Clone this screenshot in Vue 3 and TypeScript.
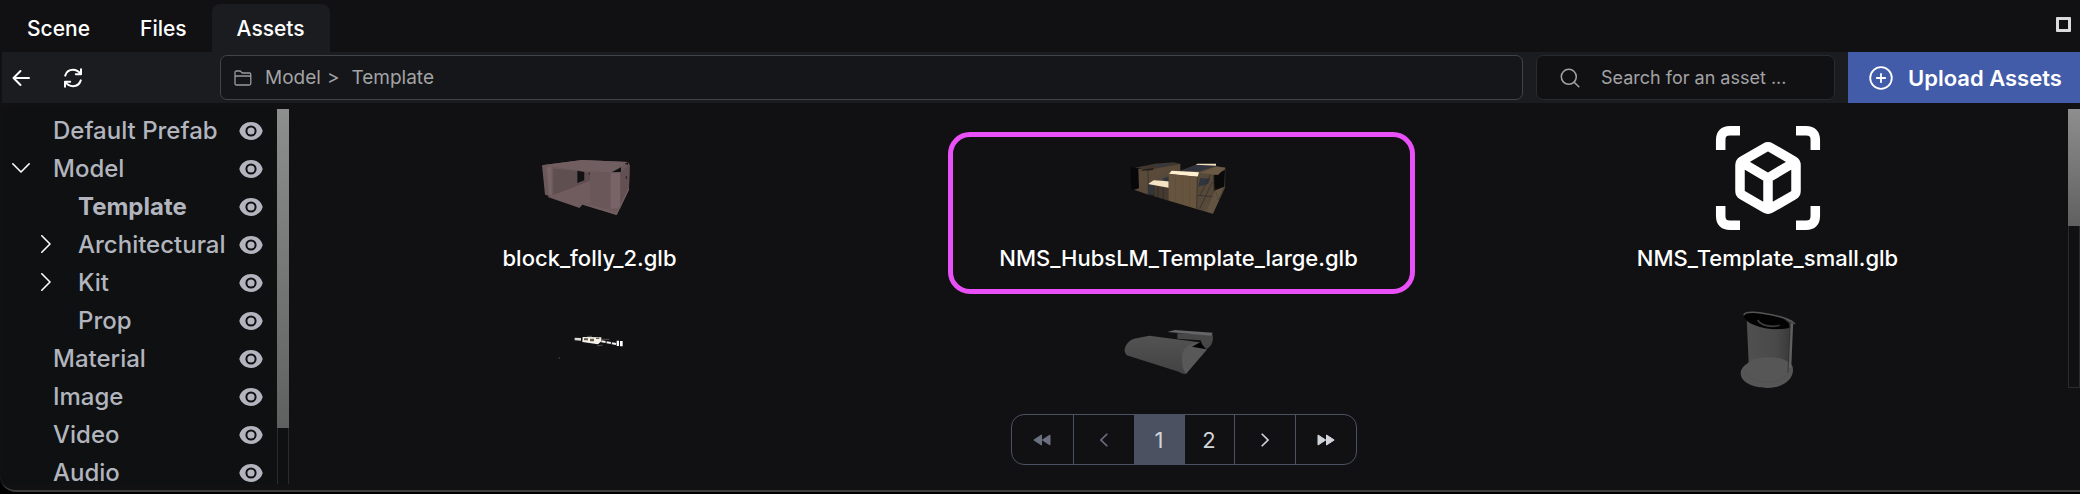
<script setup lang="ts">
import { ref } from 'vue'

interface TreeNode {
  label: string
  depth: 0 | 1
  state?: 'open' | 'closed'
}

interface Asset {
  kind: 'block' | 'building' | 'placeholder' | 'strip' | 'sheet' | 'cylinder'
  viewBox: string
  name?: string
  marked?: boolean
}

const tabs = ['Scene', 'Files', 'Assets']
const activeTab = ref('Assets')

const tree: TreeNode[] = [
  { label: 'Default Prefab', depth: 0 },
  { label: 'Model', depth: 0, state: 'open' },
  { label: 'Template', depth: 1 },
  { label: 'Architectural', depth: 1, state: 'closed' },
  { label: 'Kit', depth: 1, state: 'closed' },
  { label: 'Prop', depth: 1 },
  { label: 'Material', depth: 0 },
  { label: 'Image', depth: 0 },
  { label: 'Video', depth: 0 },
  { label: 'Audio', depth: 0 },
]
const selectedNode = ref('Template')

const assets: Asset[] = [
  { kind: 'block', viewBox: '90 -45 360 318', name: 'block_folly_2.glb' },
  { kind: 'building', viewBox: '592 15 360 318', name: 'NMS_HubsLM_Template_large.glb', marked: true },
  { kind: 'placeholder', viewBox: '0 0 120 106', name: 'NMS_Template_small.glb' },
  { kind: 'strip', viewBox: '30 -27 360 318' },
  { kind: 'sheet', viewBox: '57 -57 360 318' },
  { kind: 'cylinder', viewBox: '23 -27 360 318' },
]

const query = ref('')
const page = ref(1)
</script>

<template>
  <div class="app">
    <div class="frame">
      <header class="tabs">
        <button
          v-for="tab in tabs"
          :key="tab"
          type="button"
          class="tab"
          :class="{ active: tab === activeTab }"
          @click="activeTab = tab"
        >{{ tab }}</button>
        <button type="button" class="maximize" aria-label="Maximize"></button>
      </header>

      <div class="toolbar">
        <div class="history">
          <button type="button" class="icon-button" aria-label="Back">
            <svg width="18" height="18" viewBox="0 0 18 18" fill="none" stroke="#fff" stroke-width="2" stroke-linecap="round" stroke-linejoin="round">
              <path d="M17 9H1.5M8.5 2 1.5 9l7 7" />
            </svg>
          </button>
          <button type="button" class="icon-button" aria-label="Refresh">
            <svg width="20" height="20" viewBox="0 0 20 20" fill="none" stroke="#fff" stroke-width="2" stroke-linecap="round" stroke-linejoin="round">
              <path d="M2.2 7.6C3.4 3.9 6.5 1.800 10 1.800c3 0 5.500 1.300 7.500 4.200M18 1.200V6.300h-5.200M17.800 12.400C16.600 16.100 13.500 18.200 10 18.200c-3 0-5.500-1.300-7.500-4.200M2 18.800v-5.100h5.200" />
            </svg>
          </button>
        </div>

        <nav class="path" aria-label="Folder path">
          <svg width="18" height="16" viewBox="0 0 18 16" fill="none" stroke="#9a9a9c" stroke-width="1.300" stroke-linejoin="round">
            <path d="M1 13.500V2.500Q1 1 2.500 1H6.200L8.300 3H15.500Q16.800 3 16.800 4.500V13.500Q16.800 15 15.300 15H2.500Q1 15 1 13.500ZM1 7.500Q1 6 2.500 6H15.300Q16.800 6 16.800 7.500" />
          </svg>
          <a href="#model">Model</a><span class="separator">&gt;</span><a href="#template">Template</a>
        </nav>

        <label class="search">
          <svg width="20" height="20" viewBox="0 0 20 20" fill="none" stroke="#a3a3a5" stroke-width="1.500" stroke-linecap="round">
            <circle cx="8.800" cy="8.800" r="7.500" /><path d="m14.200 14.200 4.600 4.600" />
          </svg>
          <input v-model="query" type="text" aria-label="Search for an asset" placeholder="Search for an asset ..." />
        </label>

        <button type="button" class="upload">
          <svg width="24" height="24" viewBox="0 0 24 24" fill="none" stroke="#fff" stroke-width="1.800" stroke-linecap="round">
            <circle cx="12" cy="12" r="10.800" /><path d="M12 7.800v8.400M7.800 12h8.400" />
          </svg>
          <span>Upload Assets</span>
        </button>
      </div>

      <div class="body">
        <aside class="sidebar">
          <ul class="tree">
            <li v-for="node in tree" :key="node.label" class="node" :class="{ child: node.depth === 1, selected: node.label === selectedNode }">
              <span class="toggle">
                <button v-if="node.state" type="button" class="icon-button" :aria-label="node.state === 'open' ? 'Collapse' : 'Expand'">
                  <svg width="18" height="18" viewBox="0 0 18 18" fill="none" stroke="#fff" stroke-width="1.600" stroke-linecap="round" stroke-linejoin="round">
                    <path v-if="node.state === 'open'" d="m.8 4.800 8.200 8.200 8.200-8.200" />
                    <path v-else d="m4.800.8 8.200 8.200-8.200 8.200" />
                  </svg>
                </button>
              </span>
              <button type="button" class="node-label" @click="selectedNode = node.label">{{ node.label }}</button>
              <button type="button" class="icon-button" aria-label="Toggle visibility">
                <svg width="24" height="18" viewBox="0 0 24 18">
                  <path d="M12 0C6.600 0 2.200 3.200.6 7.900Q.2 9 .6 10.100C2.200 14.800 6.600 18 12 18s9.800-3.200 11.400-7.900q.4-1.100 0-2.200C21.800 3.200 17.400 0 12 0Z" fill="#b2b5bd" />
                  <circle cx="12" cy="9" r="4.600" fill="#b2b5bd" stroke="#0e1012" stroke-width="2" />
                </svg>
              </button>
            </li>
          </ul>
          <div class="scroll"><div class="thumb tree-thumb"></div></div>
        </aside>

        <main class="content">
          <div class="gallery">
            <div class="grid">
              <figure v-for="asset in assets" :key="asset.kind" class="asset">
                <div v-if="asset.marked" class="marker"></div>
                <svg class="preview" width="120" height="106" :viewBox="asset.viewBox" aria-hidden="true">
                  <g v-if="asset.kind === 'block'">
                    <path d="m126 76 120-16 138 6 5 9-2 74-37 76-103-32-10 10-92-31v-5l-10-3Z" fill="#6b585a" />
                    <path d="m160 86 72 7v32l22-3v-24l16-2v32l-110 36Z" fill="#5f4f51" />
                    <path d="m148 170 122-48v68l-22 3-9 10Z" fill="#705c5f" />
                    <path d="m126 76 120-16 138 6-48 32-92-6Z" fill="#715e60" />
                    <path d="m232 92 21 4v25l-21 8ZM335 97l28-15v15ZM374 72l10-6v8Z" fill="#111113" />
                    <path d="m270 96 62 2v108l-62-16Z" fill="#695759" />
                    <path d="m332 98 29-1v108l-29 1ZM140 80h15v86l-8-3Z" fill="#786467" />
                    <path d="m361 97 28-22-2 67-26 62Z" fill="#625053" />
                    <path d="m248 190 101 25 38-74v8l-37 76-102-31Z" fill="#705d60" />
                    <path d="M268 98v6M379 108v9" stroke="#2d2427" stroke-width="3" />
                  </g>
                  <g v-else-if="asset.kind === 'building'">
                    <path d="m626 142 25 3v61l-22 4ZM876 164l34-16-2 50-31 4Z" fill="#070708" />
                    <path d="m650 148 126-17v47l-96 46-43-15 15-4Z" fill="#594a39" />
                    <path d="m640 143 60-12 56-4 20 5-96 18Z" fill="#40382e" />
                    <path d="m690 137 65-8-34 12Z" fill="#343942" />
                    <path d="m777 152 45-17 61 3 28 5-1 60-36 78-50-14-84-27-60-20-1-34 61-32Z" fill="#57493a" />
                    <path d="m776 152 48-17 60 3-50 16Z" fill="#30343d" />
                    <path d="m876 166 34-16-2 50-31 12Z" fill="#09090a" />
                    <path d="m834 159 49-19 28 3-22 22Z" fill="#6a5944" />
                    <path d="m822 134 5-3h56v6Z" fill="#f3e1c0" />
                    <path d="m741 161 9-9 82 5-4 13Z" fill="#fff0d0" />
                    <path d="m679 192 17-11 45 3v19Z" fill="#f4e3c5" />
                    <path d="m721 176 21-7v15l-14-1ZM680 194l16 2v30l-16-4ZM835 174l31 2-7 16-30 8Z" fill="#30363d" />
                    <path d="m697 197 44 8v37l-44-13Z" fill="#443a2f" />
                    <path d="m741 162 86 8-2 96-84-24Z" fill="#67543f" />
                    <path d="m762 165-1 80M783 167v84M804 169v87M666 150v62M700 146v34M720 142v30M744 137v24" stroke="#5c4b38" stroke-width="2" />
                    <path d="m679 150 1 74 17 4v-32M709 199v33M725 202v35M827 170l-2 96M877 165v47l-24 62M878 230l-50-4M834 266l38-80M866 164l-32 64M878 200l12 40 18-40" fill="none" stroke="#2a2825" stroke-width="2" />
                    <path d="m877 212 32-12-36 81-24-7Z" fill="#756650" fill-opacity=".4" />
                    <path d="m660 149 35-4v5l-36 2Z" fill="#1f1b18" />
                  </g>
                  <g v-else-if="asset.kind === 'placeholder'" fill="none" stroke="#fff" stroke-width="9.500" stroke-linejoin="round">
                    <path d="M12.700 25V15Q12.700 5.700 22 5.700H32M88 5.700H98Q107.300 5.700 107.300 15V25M107.300 81V91Q107.300 100.300 98 100.300H88M32 100.300H22Q12.700 100.300 12.700 91V81" />
                    <path d="M57.500 22.500Q60 21 62.500 22.500L85.500 35.800Q88 37.300 88 40V66Q88 68.700 85.500 70.200L62.500 83.500Q60 85 57.500 83.500L34.500 70.200Q32 68.700 32 66V40Q32 37.300 34.500 35.800ZM33 37 60 53 87 37M60 53V84" />
                  </g>
                  <g v-else-if="asset.kind === 'strip'">
                    <path d="m164 113 19 1v8l-19-1Z" fill="#d8d8d4" />
                    <path d="m188 111 56 1v12l-10 9-47-7Z" fill="#f4f2ea" />
                    <path d="M192 115h12v6h-12ZM210 116h12v8h-12ZM228 113h10v4h-10Z" fill="#665b45" />
                    <path d="M202 109h14M246 118h22M232 138l16-3" stroke="#55554f" stroke-width="3" />
                    <path d="m244 124 46 8" stroke="#eee" stroke-width="6" stroke-dasharray="13 3" />
                    <path d="M290 122h7v16h-7ZM300 123h8v16h-8Z" fill="#fff" />
                    <path d="M116 174h4" stroke="#3c3c3c" stroke-width="4" />
                  </g>
                  <g v-else-if="asset.kind === 'sheet'">
                    <defs>
                      <linearGradient id="sheet-fill" x1="0" x2="0" y1="0" y2="1">
                        <stop offset="0" stop-color="#535353" /><stop offset="1" stop-color="#424242" />
                      </linearGradient>
                    </defs>
                    <path d="m232 70 106 4q4 24-11 38l-13 9-12-30-70-5Z" fill="#474747" />
                    <path d="m202 66 22-6 114 8-4 9Z" fill="#666" />
                    <path d="m148 77 150 20 22 22-64 73q-10 0-20-7L80 136q-10-12-4-26 8-18 26-24Z" fill="url(#sheet-fill)" />
                    <path d="M298 97q-52 2-52 50 0 32 12 45l62-73Z" fill="#585858" />
                    <path d="m276 110 24-13 19 21Z" fill="#030303" />
                  </g>
                  <g v-else>
                    <defs>
                      <linearGradient id="cylinder-fill">
                        <stop offset="0" stop-color="#505050" /><stop offset=".65" stop-color="#494949" /><stop offset="1" stop-color="#383838" />
                      </linearGradient>
                    </defs>
                    <path d="m139 55 137 5-4 150H146Z" fill="url(#cylinder-fill)" />
                    <path d="M121 220c0-17 13-24 25-34 20-18 92-18 112-3 14 7 20 12 20 27 0 30-32 54-76 54-46 0-81-18-81-44Z" fill="#565656" />
                    <path d="M130 42c9-8 54-5 88 5 34 9 50 17 52 36-26 7-74 7-106-7-20-8-34-18-34-34Z" fill="#020202" />
                    <path d="M131 46c0-8 20-12 52-7 44 6 82 16 101 33" fill="none" stroke="#555" stroke-width="5" />
                    <path d="M172 60c12 20 48 22 66 16" fill="none" stroke="#3d3d3d" stroke-width="5" />
                    <path d="m269 68-6 150" stroke="#343434" stroke-width="3" />
                    <path d="m275 70-6 134" stroke="#606060" stroke-width="7" />
                    <path d="M133 216c20 36 92 42 129 8" fill="none" stroke="#4e4e4e" stroke-width="2" />
                  </g>
                </svg>
                <figcaption v-if="asset.name">{{ asset.name }}</figcaption>
              </figure>
            </div>
            <div class="scroll"><div class="thumb grid-thumb"></div></div>
          </div>

          <nav class="pager" aria-label="Pages">
            <button type="button" class="step" disabled aria-label="First page">
              <svg width="18" height="12" viewBox="0 0 18 12" fill="currentColor" stroke="currentColor" stroke-linejoin="round"><path d="M8.500 1v10L.8 6ZM17 1v10L9.300 6Z" /></svg>
            </button>
            <button type="button" class="step" disabled aria-label="Previous page">
              <svg width="8" height="14" viewBox="0 0 8 14" fill="none" stroke="currentColor" stroke-width="1.600"><path d="M7.300.7 1 7l6.300 6.300" /></svg>
            </button>
            <button
              v-for="n in 2"
              :key="n"
              type="button"
              class="page"
              :class="{ current: n === page }"
              @click="page = n"
            >{{ n }}</button>
            <button type="button" class="step" aria-label="Next page">
              <svg width="8" height="14" viewBox="0 0 8 14" fill="none" stroke="currentColor" stroke-width="1.600"><path d="M.7.7 7 7 .7 13.300" /></svg>
            </button>
            <button type="button" class="step" aria-label="Last page">
              <svg width="18" height="12" viewBox="0 0 18 12" fill="currentColor" stroke="currentColor" stroke-linejoin="round"><path d="M1 1v10L8.700 6ZM9.500 1v10L17.200 6Z" /></svg>
            </button>
          </nav>
        </main>
      </div>
    </div>
  </div>
</template>

<style>
body {
  background: #000;
}
</style>

<style scoped>
.app {
  box-sizing: border-box;
  height: 100vh;
  padding-bottom: 2px;
  overflow: hidden;
  font-family: Inter, "Liberation Sans", sans-serif;
  color: #fff;
}
.app * {
  box-sizing: border-box;
}
button {
  margin: 0;
  padding: 0;
  border: 0;
  background: none;
  color: inherit;
  font: inherit;
  cursor: pointer;
}
svg {
  display: block;
  flex: none;
}
.frame {
  display: flex;
  flex-direction: column;
  height: 100%;
  padding-left: 2px;
  border-bottom: 2px solid #3c3c3d;
  border-bottom-left-radius: 16px;
  background: #111113;
  overflow: hidden;
}

.tabs {
  display: flex;
  align-items: flex-end;
  height: 52px;
  flex: none;
}
.tab {
  height: 48px;
  padding: 0 25px;
  border-radius: 8px 8px 0 0;
  font-size: 21px;
  font-weight: 500;
}
.tab.active {
  background: #1b1c20;
}
.maximize {
  align-self: center;
  width: 15px;
  height: 15px;
  margin: 0 9px 4px auto;
  border: 3px solid #dcdcdc;
  border-radius: 1px;
}

.toolbar {
  display: flex;
  height: 51px;
  flex: none;
  background: #1b1c20;
}
.history {
  display: flex;
  align-items: center;
  gap: 33px;
  width: 218px;
  padding-left: 10px;
}
.path, .search {
  display: flex;
  align-items: center;
  margin: 3px 13px 3px 0;
  border: 1px solid #42444a;
  border-radius: 7px;
  color: #a3a3a5;
}
.path {
  flex: 1;
  padding-left: 13px;
  background: #141619;
  font-size: 19px;
}
.path a {
  color: inherit;
  text-decoration: none;
}
.path svg {
  margin-right: 13px;
}
.separator {
  margin: 0 12px 0 6px;
}
.search {
  width: 299px;
  padding: 0 20px 0 23px;
  border-color: #2a2b2f;
  background: #111113;
}
.search input {
  flex: 1;
  min-width: 0;
  margin-left: 21px;
  padding: 0;
  border: 0;
  outline: 0;
  background: none;
  color: inherit;
  font: 18px Inter, "Liberation Sans", sans-serif;
}
.search input::placeholder {
  color: #a3a3a5;
  opacity: 1;
}
.upload {
  display: flex;
  align-items: center;
  gap: 15px;
  width: 232px;
  padding-left: 21px;
  background: #425caa;
  font-size: 22px;
  font-weight: 600;
  white-space: nowrap;
}

.body {
  display: flex;
  flex: 1;
  min-height: 0;
  padding-top: 6px;
}
.sidebar {
  display: flex;
  width: 287px;
  margin-bottom: 6px;
  background: #0e1012;
  overflow: hidden;
}
.tree {
  flex: 1;
  margin: 0;
  padding: 3px 14px 0 10px;
  list-style: none;
}
.node {
  display: flex;
  align-items: center;
  height: 38px;
  color: #b2b5bd;
  font-size: 24px;
  font-weight: 500;
  line-height: 20px;
}
.node.child {
  padding-left: 25px;
}
.node.selected {
  font-weight: 700;
}
.toggle {
  width: 18px;
  margin-right: 23px;
}
.node-label {
  flex: 1;
  min-width: 0;
  text-align: left;
  white-space: nowrap;
}
.scroll {
  width: 12px;
  flex: none;
  border: 1px solid #2a2b2d;
  border-top: 0;
}
.sidebar .scroll {
  border-bottom: 0;
}
.thumb {
  margin: 0 -1px;
  background: linear-gradient(#8e8e8e, #606060);
}
.tree-thumb {
  height: 85%;
}
.grid-thumb {
  height: 42%;
}

.content {
  display: flex;
  flex: 1;
  flex-direction: column;
  min-width: 0;
}
.gallery {
  display: flex;
  flex: 1;
  min-height: 0;
  overflow: hidden;
}
.grid {
  display: grid;
  flex: 1;
  grid-template-columns: repeat(3, 1fr);
  grid-auto-rows: 148px;
  row-gap: 18px;
  padding: 16px 6px 0;
  padding-left: 6px;
}
.asset {
  position: relative;
  display: flex;
  flex-direction: column;
  align-items: center;
  gap: 12px;
  margin: 0;
  font-size: 22px;
  font-weight: 500;
  line-height: 30px;
}
.marker {
  position: absolute;
  inset: 7px 58px -21px 64px;
  border: 5px solid #ea50f7;
  border-radius: 22px;
}
.pager {
  display: flex;
  align-self: center;
  height: 51px;
  margin: 26px 2px 25px 0;
  border: 1px solid #4b5261;
  border-radius: 13px;
  overflow: hidden;
  color: #d1d5db;
}
.pager button {
  display: flex;
  align-items: center;
  justify-content: center;
}
.pager button + button {
  border-left: 1px solid #4b5261;
}
.pager .step {
  width: 61px;
}
.pager .page {
  width: 50px;
  font-size: 22px;
}
.pager .step:disabled {
  color: #6b7080;
}
.pager .page.current {
  background: #4b5160;
}
</style>
